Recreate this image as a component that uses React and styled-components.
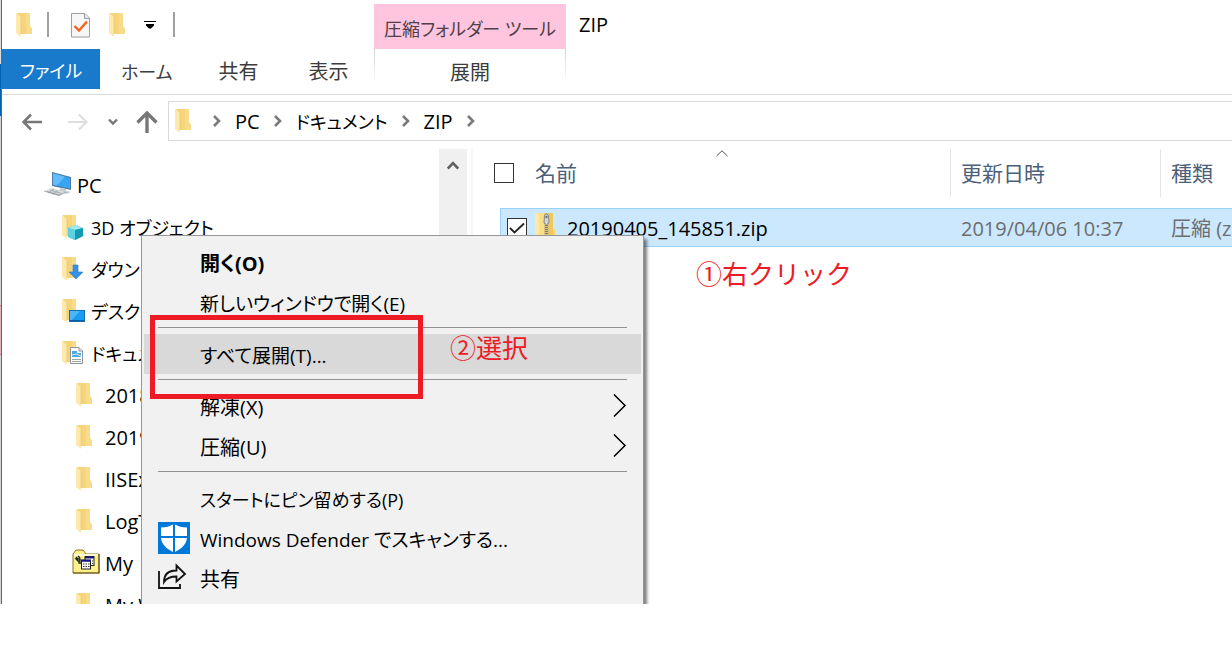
import React, { useState } from 'react'
import styled, { createGlobalStyle, css } from 'styled-components'

const GlobalStyle = createGlobalStyle`
  * {
    box-sizing: border-box;
  }

  body {
    margin: 0;
    background-color: #fff;
    color: #000;
    font-family: "Open Sans", "Noto Sans CJK JP", sans-serif;
    font-size: 20px;
    line-height: 28px;
    font-feature-settings: "palt";
  }

  button {
    padding: 0;
    border: none;
    background-color: transparent;
    color: inherit;
    font: inherit;
    font-feature-settings: inherit;
    text-align: left;
  }

  svg {
    display: block;
    flex: none;
  }
`

const Page = styled.div`
  display: flex;
  height: 100vh;
  padding-bottom: 58px;
`

const Backdrop = styled.div`
  width: 1px;
  background: linear-gradient(
    #dcdcdc 0 64px,
    #0063b1 64px 116px,
    #d4d4d4 116px 305px,
    #d9777c 305px 306px,
    #e3b4b8 306px 354px,
    #d9777c 354px 355px,
    #d4d4d4 355px
  );
`

const Window = styled.div`
  position: relative;
  flex: 1;
  min-width: 0;
  display: flex;
  flex-direction: column;
  overflow: hidden;
  border-left: 1px solid #1979ca;
  white-space: nowrap;
`

/* ribbon */

const Ribbon = styled.header`
  display: flex;
  height: 95px;
  border-bottom: 1px solid #dadbdc;
`

const RibbonMain = styled.div`
  width: 372px;
`

const QuickAccess = styled.div`
  display: flex;
  align-items: center;
  height: 49px;
  padding-left: 10px;
`

const AppIcon = styled.div`
  margin-right: 7px;
`

const ToolGroup = styled.div`
  display: flex;
  align-items: center;
  gap: 10px;
  margin: 0 16px 0 18px;
`

const QuickDivider = styled.div`
  width: 2px;
  height: 25px;
  background-color: #a0a0a0;
`

const Tabs = styled.nav`
  display: flex;
`

const Tab = styled.button`
  flex: none;
  min-width: 90px;
  height: 40px;
  padding: 6px 21px 0;
  color: #3c3c3c;
  font-size: ${({ $kana }) => ($kana ? '18px' : '20px')};
  text-align: center;
`

const FileTab = styled(Tab)`
  width: 98px;
  padding: 3px 0 0;
  background-color: #1979ca;
  color: #fff;
`

const ContextGroup = styled.div`
  width: 192px;
  padding-top: 4px;
  text-align: center;
`

const ContextTitle = styled.div`
  height: 45px;
  padding-top: 11px;
  background-color: #ffc5de;
  color: #4d4047;
  font-size: 18px;
`

const ContextTab = styled(Tab)`
  display: block;
  width: 100%;
  height: 34px;
  padding: 10px 0 0;
  border: 1px solid;
  border-width: 0 1px;
  border-image: linear-gradient(#cfcfcf, #fff) 1;
`

const WindowTitle = styled.h1`
  margin: 0;
  padding: 11px 13px;
  font-size: 20px;
  font-weight: 400;
`

/* address bar */

const AddressRow = styled.div`
  display: flex;
  padding: 6px 0 8px 7px;
`

const NavButton = styled.button`
  display: flex;
  align-items: center;
  justify-content: center;
  width: ${({ $width }) => $width};
  padding-top: 2px;
  color: #777;
`

const AddressBox = styled.div`
  flex: 1;
  display: flex;
  align-items: center;
  gap: 14px;
  height: 40px;
  padding-left: 2px;
  border: 1px solid #d9d9d9;
  border-right: none;
`

const Crumb = styled.button`
  padding-top: 2px;
  font-size: ${({ $kana }) => ($kana ? '18px' : '20px')};
`

/* navigation pane */

const Body = styled.div`
  flex: 1;
  min-height: 0;
  display: flex;
`

const NavPane = styled.aside`
  display: flex;
  width: 471px;
  padding-right: 4px;
  border-right: 2px solid #f7f7f7;
`

const Tree = styled.ul`
  flex: 1;
  margin: 0;
  padding: 15px 0 0;
  list-style: none;
  overflow: hidden;
`

const TreeItem = styled.li`
  display: flex;
  align-items: center;
  gap: 5px;
  height: 42px;
  padding-left: ${({ $level }) => 42 + $level * 14}px;
`

const Label = styled.span`
  padding-top: 2px;
  font-size: ${({ $kana }) => ($kana ? '18px' : '20px')};
`

const ScrollBar = styled.div`
  display: flex;
  justify-content: center;
  width: 28px;
  padding-top: 11px;
  background-color: #f0f0f0;
`

/* file list */

const FileTable = styled.table`
  flex: 1;
  min-width: 0;
  display: block;
  overflow: hidden;

  thead,
  tbody {
    display: block;
  }
`

const rowGrid = css`
  display: grid;
  grid-template-columns: minmax(0, 1fr) 210px 72px;
`

const HeadRow = styled.tr`
  ${rowGrid}
  height: 48px;
  margin-left: 21px;
`

const HeadCell = styled.th`
  position: relative;
  display: flex;
  align-items: center;
  gap: 21px;
  padding: 0 0 0 ${({ $first }) => ($first ? '0' : '10px')};
  border-left: ${({ $first }) => ($first ? 'none' : '1px solid #e5e5e5')};
  color: #4c607a;
  font-size: 21px;
  font-weight: 400;
`

const SortMark = styled.div`
  position: absolute;
  top: 1px;
  left: 50%;
  transform: translateX(-50%);
`

const FileRow = styled.tr`
  ${rowGrid}
  height: 39px;
  margin: 11px 0 0 27px;
  border: 1px solid #99d1ff;
  border-right: none;
  background-color: #cce8ff;
`

const Cell = styled.td`
  display: flex;
  align-items: center;
  padding: 2px 0 0 11px;
  color: #6d6d6d;
  overflow: hidden;
`

const NameCell = styled(Cell)`
  gap: 8px;
  padding: 0 0 0 6px;
  color: #000;
`

const CheckLabel = styled.label`
  display: grid;

  input,
  svg {
    grid-area: 1 / 1;
  }

  svg {
    pointer-events: none;
  }
`

const CheckInput = styled.input`
  appearance: none;
  width: 20px;
  height: 20px;
  margin: 0;
  border: 1px solid #333;
  background-color: #fff;
`

/* context menu */

const Menu = styled.div`
  position: absolute;
  top: 235px;
  bottom: -8px;
  left: 139px;
  width: 503px;
  padding: 6px 2px;
  border: 1px solid #979797;
  background-color: #f1f1f1;
  box-shadow: 3px 4px 3px rgba(0, 0, 0, 0.5);
`

const menuTextSize = { kana: '18px', mixed: '19px', kanji: '20px' }

const MenuItem = styled.button`
  display: flex;
  align-items: center;
  gap: 10px;
  width: 100%;
  height: 40px;
  padding: 0 14px;
  background-color: ${({ $active }) => ($active ? '#d9d9d9' : 'transparent')};
  font-size: ${({ $script }) => menuTextSize[$script]};
  font-weight: ${({ $bold }) => ($bold ? 700 : 400)};
`

const MenuIcon = styled.span`
  width: 32px;
`

const MenuText = styled.span`
  flex: 1;
  padding-top: 3px;
`

const MenuLine = styled.hr`
  height: 1px;
  margin: 5px 14px 6px;
  border: none;
  background-color: #919191;
`

/* notes drawn over the window */

const RedFrame = styled.div`
  position: absolute;
  top: 315px;
  left: 148px;
  width: 273px;
  height: 84px;
  border: 5px solid #ed1c24;
  pointer-events: none;
`

const Note = styled.div`
  position: absolute;
  top: ${({ $top }) => $top};
  left: ${({ $left }) => $left};
  color: #ed1c24;
  font-family: "Noto Sans CJK JP", sans-serif;
  font-size: 26px;
  line-height: 36px;
  font-feature-settings: normal;
`

const FolderIcon = ({ children }) => (
  <svg width="28" height="28" viewBox="0 0 28 28">
    <path d="M5 2H18V15L20 18V23H8Z" fill="#f6d57a" />
    <path d="M14 2H18V15L20 18V23H14Z" fill="#f9dc8b" />
    <path d="M4 2L9 6V26L4 22Z" fill="#fde9ae" />
    <path d="M9 6V23" stroke="#e9c566" strokeWidth="0.7" />
    {children}
  </svg>
)

const PcIcon = () => (
  <svg width="28" height="28" viewBox="0 0 28 28">
    <path d="M8 1L27 6V19L8 15Z" fill="#4b7ea8" />
    <path d="M9 2.500L26 7V17.500L9 13.800Z" fill="#37a5f3" />
    <path d="M9 2.500L21 5.700L13 14.600L9 13.800Z" fill="#63bdfa" />
    <path d="M17 17L22 18V20L27 21L22 23L14 20Z" fill="#c3c9ce" />
    <path d="M0 20L8 17L22 21L15 25Z" fill="#d9dde0" />
    <path d="M3 20.500L16 24M6 19L18 22.600M4 22L10 18M8 23.400L14 19.500" stroke="#9aa2a8" strokeWidth="0.8" />
    <path d="M0 20L15 24.500L22 21" fill="none" stroke="#8b949b" strokeWidth="0.7" />
  </svg>
)

const ObjectsIcon = () => (
  <FolderIcon>
    <path d="M10 15L18 12L25 15V23L17 27L10 24Z" fill="#29b7ce" />
    <path d="M10 15L18 12L25 15L17 17Z" fill="#a5e8f0" />
    <path d="M10 15L17 17V27L10 24Z" fill="#5fd2e0" />
    <path d="M17 17L25 15V23L17 27Z" fill="#129bb5" />
  </FolderIcon>
)

const DownloadsIcon = () => (
  <FolderIcon>
    <path d="M15 10H20V17H25L18 24L11 17H15Z" fill="#3791e6" stroke="#2478c8" strokeWidth="0.6" />
  </FolderIcon>
)

const DesktopIcon = () => (
  <FolderIcon>
    <rect x="11.500" y="13.500" width="15" height="11" fill="#1c9bf2" stroke="#0c6fb8" />
    <path d="M12 14H22L13 24H12Z" fill="#4ab7fb" />
    <path d="M12 23.500H26" stroke="#0a5d9c" />
  </FolderIcon>
)

const DocumentsIcon = () => (
  <FolderIcon>
    <path d="M12.500 8.500H21L24.500 12V24.500H12.500Z" fill="#fff" stroke="#8b959d" />
    <path d="M21 8.500V12H24.500" fill="#dfe4e8" stroke="#8b959d" />
    <path d="M14 12H19V14H23V18H14Z" fill="#4ba7e0" />
    <path d="M14 20.500H23M14 22.500H23" stroke="#9aa4ad" />
    <path d="M14 16L18 15L23 17" fill="none" stroke="#dff0fa" />
  </FolderIcon>
)

const SourcesIcon = () => (
  <svg width="28" height="28" viewBox="0 0 28 28">
    <path d="M1 24V5L4 1H11L14 5H27V24Z" fill="#fbf08c" stroke="#8a7326" />
    <path d="M2 6H26" stroke="#fffbd0" strokeWidth="2" />
    <path d="M27 5V24H1" fill="none" stroke="#6b5518" strokeWidth="1.200" />
    <path d="M4 8L6 10M6 7L8 9M4 10H8V12L6 12ZM7 12V14H10" fill="none" stroke="#222" strokeWidth="1.300" />
    <rect x="13" y="7.500" width="9" height="9" fill="#fff" stroke="#222" />
    <path d="M13 8.500H22" stroke="#17178c" strokeWidth="2" />
    <rect x="9.500" y="11" width="9" height="9" fill="#fff" stroke="#222" />
    <path d="M9.500 11.800H18.500" stroke="#17178c" strokeWidth="2" />
    <path d="M11 15H17.500M11 17.500H17.500M20 12H21M20 14.500H21" stroke="#333" strokeDasharray="1.500 1" />
  </svg>
)

const TaskIcon = () => (
  <svg width="28" height="28" viewBox="0 0 28 28">
    <path d="M4.500 2.500H18L22.500 7V26H4.500Z" fill="#f7f7f7" stroke="#9aa0a6" />
    <path d="M17.500 2.500V7.500H22.500" fill="#e2e4e6" stroke="#9aa0a6" />
    <path d="M7.500 15L12 19.500L20 10.500" fill="none" stroke="#f2611d" strokeWidth="2.400" />
  </svg>
)

const ZipIcon = () => (
  <svg width="24" height="32" viewBox="0 0 24 32">
    <path d="M0 1H18V16L20 18V30H0Z" fill="#f8d670" />
    <path d="M0 1H4V30H0Z" fill="#fde9a6" />
    <path d="M4 1H9V30H4Z" fill="#fbdf85" />
    <path d="M14 1H18V30H14Z" fill="#f2c958" />
    <rect x="9" y="1" width="5" height="29" fill="#dfc27a" />
    <path d="M11.500 13V30" stroke="#7c7c7c" strokeWidth="3" strokeDasharray="1 1" />
    <path d="M9.500 3.500Q11.500 0.500 13.500 3.500L14 11Q11.500 14 9 11Z" fill="#d5d8da" stroke="#80868a" />
    <circle cx="11.500" cy="5" r="1.200" fill="#6c7276" />
  </svg>
)

const DefenderIcon = () => (
  <svg width="32" height="32" viewBox="0 0 32 32">
    <rect width="32" height="32" fill="#0078d7" />
    <path d="M16 2C12 4.500 7.500 5.500 3 5.500V15C3 22 8.500 27 16 30.500C23.500 27 29 22 29 15V5.500C24.500 5.500 20 4.500 16 2Z" fill="#fff" />
    <path d="M16 1V31M2 15H30" stroke="#0078d7" strokeWidth="2" />
  </svg>
)

const ShareIcon = () => (
  <svg width="32" height="32" viewBox="0 0 32 32" fill="none" stroke="#111" strokeWidth="1.800">
    <path d="M1 9V26H22V22" />
    <path d="M6 20C6 12 11 8.500 18.500 8.500V3.500L27 12L18.500 19.500V14.500C13 14.500 9 15.500 6 20Z" />
  </svg>
)

const BackIcon = () => (
  <svg width="20" height="18" viewBox="0 0 20 18" fill="none" stroke="currentColor" strokeWidth="2.600">
    <path d="M20 9H2M9 1.500L1.500 9L9 16.500" />
  </svg>
)

const ForwardIcon = () => (
  <svg width="20" height="18" viewBox="0 0 20 18" fill="none" stroke="#dedede" strokeWidth="2.200">
    <path d="M0 9H18M11 1.500L18.500 9L11 16.500" />
  </svg>
)

const UpIcon = () => (
  <svg width="22" height="22" viewBox="0 0 22 22" fill="none" stroke="currentColor" strokeWidth="3.400">
    <path d="M11 22V2M1.500 11.500L11 2L20.500 11.500" />
  </svg>
)

const HistoryIcon = () => (
  <svg width="10" height="8" viewBox="0 0 10 8" fill="none" stroke="currentColor" strokeWidth="2.400">
    <path d="M1 1.500L5 5.500L9 1.500" />
  </svg>
)

const CrumbArrow = () => (
  <svg width="8" height="12" viewBox="0 0 8 12" fill="none" stroke="#7a7a7a" strokeWidth="2.600">
    <path d="M1 1L6 6L1 11" />
  </svg>
)

const MoreIcon = () => (
  <svg width="14" height="10" viewBox="0 0 14 10">
    <path d="M1 1H13V2H1ZM3 4H11V5.500L8 8.500H6L3 5.500Z" />
  </svg>
)

const ScrollUpIcon = () => (
  <svg width="12" height="10" viewBox="0 0 12 10" fill="none" stroke="#606060" strokeWidth="2.600">
    <path d="M0.800 8.600L6 3.200L11.200 8.600" />
  </svg>
)

const SortIcon = () => (
  <svg width="12" height="7" viewBox="0 0 12 7" fill="none" stroke="#555">
    <path d="M0.500 6L6 0.800L11.500 6" />
  </svg>
)

const SubmenuIcon = () => (
  <svg width="14" height="24" viewBox="0 0 14 24" fill="none" stroke="#000" strokeWidth="1.500">
    <path d="M1 0.500L12 11.500L1 22.500" />
  </svg>
)

const CheckBox = ({ label, defaultChecked = false }) => {
  const [checked, setChecked] = useState(defaultChecked)
  return (
    <CheckLabel>
      <CheckInput
        type="checkbox"
        aria-label={label}
        checked={checked}
        onChange={(e) => setChecked(e.target.checked)}
      />
      {checked && (
        <svg width="20" height="20" viewBox="0 0 20 20" fill="none" stroke="#222" strokeWidth="1.800">
          <path d="M3 10L7.500 14.500L17 5.500" />
        </svg>
      )}
    </CheckLabel>
  )
}

const treeItems = [
  { name: 'PC', level: 0, icon: <PcIcon /> },
  { name: '3D オブジェクト', level: 1, icon: <ObjectsIcon />, kana: true },
  { name: 'ダウンロード', level: 1, icon: <DownloadsIcon />, kana: true },
  { name: 'デスクトップ', level: 1, icon: <DesktopIcon />, kana: true },
  { name: 'ドキュメント', level: 1, icon: <DocumentsIcon />, kana: true },
  { name: '2018', level: 2, icon: <FolderIcon /> },
  { name: '2019', level: 2, icon: <FolderIcon /> },
  { name: 'IISEx', level: 2, icon: <FolderIcon /> },
  { name: 'LogT', level: 2, icon: <FolderIcon /> },
  { name: 'My', level: 2, icon: <SourcesIcon /> },
  { name: 'My W', level: 2, icon: <FolderIcon /> },
]

const menuItems = [
  { name: '開く(O)', script: 'kanji', bold: true },
  { name: '新しいウィンドウで開く(E)', script: 'mixed' },
  { line: true },
  { name: 'すべて展開(T)...', script: 'mixed', active: true },
  { line: true },
  { name: '解凍(X)', script: 'kanji', submenu: true },
  { name: '圧縮(U)', script: 'kanji', submenu: true },
  { line: true },
  { name: 'スタートにピン留めする(P)', script: 'kana' },
  { name: 'Windows Defender でスキャンする...', script: 'mixed', icon: <DefenderIcon /> },
  { name: '共有', script: 'kanji', icon: <ShareIcon /> },
]

const crumbs = [
  { name: 'PC' },
  { name: 'ドキュメント', kana: true },
  { name: 'ZIP' },
]

const App = () => {
  return (
    <>
      <GlobalStyle />
      <Page>
        <Backdrop />
        <Window>
          <Ribbon>
            <RibbonMain>
              <QuickAccess>
                <AppIcon>
                  <FolderIcon />
                </AppIcon>
                <QuickDivider />
                <ToolGroup>
                  <button aria-label="プロパティ"><TaskIcon /></button>
                  <button aria-label="新しいフォルダー"><FolderIcon /></button>
                  <button aria-label="カスタマイズ"><MoreIcon /></button>
                </ToolGroup>
                <QuickDivider />
              </QuickAccess>
              <Tabs>
                <FileTab $kana>ファイル</FileTab>
                <Tab $kana>ホーム</Tab>
                <Tab>共有</Tab>
                <Tab>表示</Tab>
              </Tabs>
            </RibbonMain>
            <ContextGroup>
              <ContextTitle>圧縮フォルダー ツール</ContextTitle>
              <ContextTab>展開</ContextTab>
            </ContextGroup>
            <WindowTitle>ZIP</WindowTitle>
          </Ribbon>

          <AddressRow>
            <NavButton $width="46px" aria-label="戻る"><BackIcon /></NavButton>
            <NavButton $width="46px" aria-label="進む"><ForwardIcon /></NavButton>
            <NavButton $width="24px" aria-label="履歴"><HistoryIcon /></NavButton>
            <NavButton $width="43px" aria-label="上へ"><UpIcon /></NavButton>
            <AddressBox>
              <FolderIcon />
              <CrumbArrow />
              {crumbs.map((crumb) => (
                <React.Fragment key={crumb.name}>
                  <Crumb $kana={crumb.kana}>{crumb.name}</Crumb>
                  <CrumbArrow />
                </React.Fragment>
              ))}
            </AddressBox>
          </AddressRow>

          <Body>
            <NavPane>
              <Tree>
                {treeItems.map((item) => (
                  <TreeItem key={item.name} $level={item.level}>
                    {item.icon}
                    <Label $kana={item.kana}>{item.name}</Label>
                  </TreeItem>
                ))}
              </Tree>
              <ScrollBar>
                <ScrollUpIcon />
              </ScrollBar>
            </NavPane>
            <FileTable>
              <thead>
                <HeadRow>
                  <HeadCell $first>
                    <CheckBox label="すべて選択" />
                    名前
                    <SortMark><SortIcon /></SortMark>
                  </HeadCell>
                  <HeadCell>更新日時</HeadCell>
                  <HeadCell>種類</HeadCell>
                </HeadRow>
              </thead>
              <tbody>
                <FileRow>
                  <NameCell>
                    <CheckBox label="20190405_145851.zip" defaultChecked />
                    <ZipIcon />
                    <Label>20190405_145851.zip</Label>
                  </NameCell>
                  <Cell>2019/04/06 10:37</Cell>
                  <Cell>圧縮 (zip</Cell>
                </FileRow>
              </tbody>
            </FileTable>
          </Body>

          <Menu role="menu">
            {menuItems.map((item, i) =>
              item.line ? (
                <MenuLine key={i} />
              ) : (
                <MenuItem
                  key={i}
                  role="menuitem"
                  $script={item.script}
                  $active={item.active}
                  $bold={item.bold}
                >
                  <MenuIcon>{item.icon}</MenuIcon>
                  <MenuText>{item.name}</MenuText>
                  {item.submenu && <SubmenuIcon />}
                </MenuItem>
              )
            )}
          </Menu>

          <RedFrame />
          <Note $top="255px" $left="694px">①右クリック</Note>
          <Note $top="329px" $left="448px">②選択</Note>
        </Window>
      </Page>
    </>
  )
}

export default App
